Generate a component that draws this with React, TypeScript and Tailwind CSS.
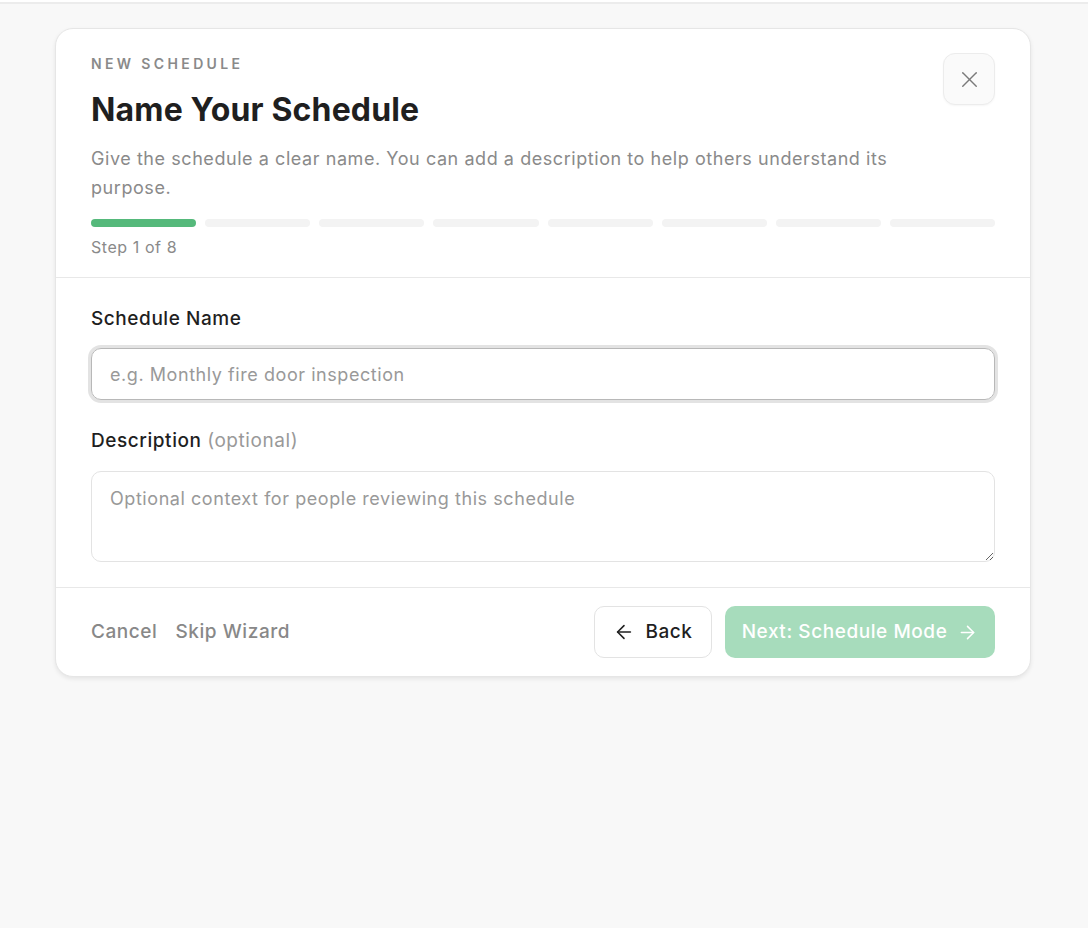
import React from "react";
import { X, ArrowLeft, ArrowRight } from "lucide-react";

const TOTAL_STEPS = 8;

export default function App() {
  const current = 1;

  return (
    <div
      className="min-h-screen bg-[#f8f8f8] text-[#1f1f1f] tracking-[0.035em]"
      style={{ fontFamily: "Inter, 'Noto Sans', sans-serif" }}
    >
      <div className="h-[2px] bg-white" />
      <div className="h-[2px] bg-[#ececec]" />
      <div className="pt-[24px] pl-[55px]">
        <div className="w-[976px] bg-white rounded-[18px] border border-[#e6e6e6] shadow-[0_2px_4px_rgba(0,0,0,0.08)]">
          {/* Header */}
          <div className="px-[35px] pt-6 pb-[18px] border-b border-[#e8e8e8]">
            <div className="flex items-start justify-between">
              <div>
                <p className="text-[14px] leading-5 font-semibold tracking-[0.24em] text-[#8a8a8a] pt-[1px]">
                  NEW SCHEDULE
                </p>
                <h1 className="mt-4 text-[32px] leading-10 font-bold tracking-[0.005em] text-[#1f1f1f]">
                  Name Your Schedule
                </h1>
              </div>
              <button className="w-[52px] h-[52px] rounded-[12px] border border-[#ececec] bg-[#fafafa] flex items-center justify-center text-[#7a7a7a] shadow-[0_1px_2px_rgba(0,0,0,0.04)]">
                <X size={27} strokeWidth={1.3} />
              </button>
            </div>
            <p className="mt-[14px] text-[18px] leading-[29px] text-[#8a8a8a] pr-16">
              Give the schedule a clear name. You can add a description to help others understand its purpose.
            </p>
            <div className="mt-[17px] flex gap-[9px]">
              {Array.from({ length: TOTAL_STEPS }).map((_, i) => (
                <div
                  key={i}
                  className={
                    i < current
                      ? "flex-1 h-2 rounded-full bg-[#55b97b]"
                      : "flex-1 h-2 rounded-full bg-[#f3f3f3]"
                  }
                />
              ))}
            </div>
            <p className="mt-2 text-[16px] leading-6 text-[#8a8a8a]">
              Step {current} of {TOTAL_STEPS}
            </p>
          </div>

          {/* Body */}
          <div className="px-[35px] pt-[27px] pb-[25px] border-b border-[#e8e8e8]">
            <label className="block text-[19px] leading-7 font-medium text-[#1f1f1f]">
              Schedule Name
            </label>
            <input
              type="text"
              placeholder="e.g. Monthly fire door inspection"
              className="mt-[15px] block w-full h-[52px] rounded-[10px] border border-[#b8b8b8] px-[18px] text-[18px] text-[#1f1f1f] placeholder:text-[#999999] outline-none ring-[3px] ring-[#e3e3e3]"
            />
            <label className="mt-[27px] block text-[19px] leading-7 font-medium text-[#1f1f1f]">
              Description <span className="font-normal text-[#999999]">(optional)</span>
            </label>
            <textarea
              placeholder="Optional context for people reviewing this schedule"
              className="mt-4 block w-full h-[91px] rounded-[10px] border border-[#e3e3e3] px-[18px] py-[13px] text-[18px] leading-7 text-[#1f1f1f] placeholder:text-[#999999] outline-none resize-y"
            />
          </div>

          {/* Footer */}
          <div className="px-[35px] py-[18px] flex items-center justify-between">
            <div className="flex items-center gap-[18px] text-[19px] font-medium text-[#888888]">
              <button>Cancel</button>
              <button>Skip Wizard</button>
            </div>
            <div className="flex items-center gap-[13px]">
              <button className="h-[52px] w-[118px] rounded-[10px] border border-[#e3e3e3] bg-white flex items-center justify-center gap-[10px] text-[19px] font-medium text-[#1f1f1f]">
                <ArrowLeft size={22} strokeWidth={1.7} />
                Back
              </button>
              <button className="h-[52px] w-[270px] rounded-[10px] bg-[#a7dcbc] flex items-center justify-center gap-[10px] text-[19px] font-medium text-white">
                Next: Schedule Mode
                <ArrowRight size={21} strokeWidth={1.7} />
              </button>
            </div>
          </div>
        </div>
      </div>
    </div>
  );
}
